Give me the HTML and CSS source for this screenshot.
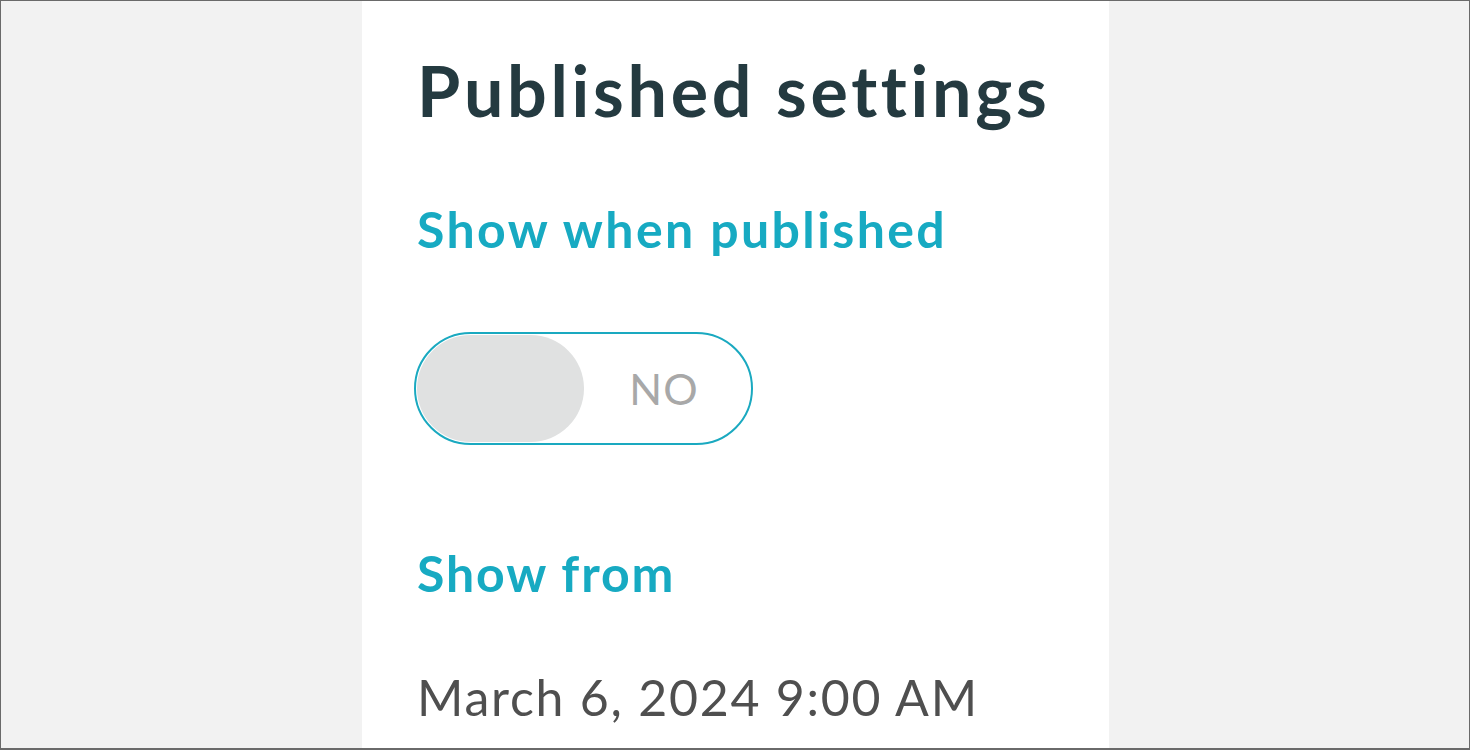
FILE: index.html
```html
<!DOCTYPE html>
<html lang="en">
<head>
<meta charset="utf-8">
<title>Published settings</title>
<link rel="stylesheet" href="styles.css">
</head>
<body>
<div class="frame">
  <main class="panel">
    <h1 class="title">Published settings</h1>
    <h2 class="label label-first">Show when published</h2>
    <div class="toggle" role="switch" aria-checked="false">
      <span class="knob"></span>
      <span class="state">NO</span>
    </div>
    <h2 class="label label-second">Show from</h2>
    <p class="date">March 6, 2024 9:00 AM</p>
  </main>
</div>
</body>
</html>
```
FILE: styles.css
```css
html, body {
  margin: 0;
  padding: 0;
}
body {
  width: 1470px;
  height: 750px;
  overflow: hidden;
  font-family: Lato, "Liberation Sans", sans-serif;
  font-variant-ligatures: none;
}
.frame {
  box-sizing: border-box;
  width: 1470px;
  height: 750px;
  border: 1px solid #6a6a6a;
  border-bottom-width: 2px;
  background: #f2f2f2;
  display: flex;
  padding-left: 361px;
}
.panel {
  width: 747px;
  background: #ffffff;
  box-sizing: border-box;
  padding: 54px 0 0 55px;
  display: flex;
  flex-direction: column;
  align-items: flex-start;
}
.title {
  margin: 0;
  font-size: 70px;
  line-height: 1;
  font-weight: 700;
  letter-spacing: 3.7px;
  color: #243a40;
}
.label {
  margin: 0;
  font-size: 50px;
  line-height: 1;
  font-weight: 700;
  color: #17aac2;
}
.label-first {
  margin-top: 79px;
  letter-spacing: 2.4px;
}
.label-second {
  margin-top: 103px;
  letter-spacing: 1.9px;
}
.toggle {
  margin-top: 78px;
  margin-left: -3px;
  box-sizing: border-box;
  width: 339px;
  height: 113px;
  border: 2.5px solid #1aa9c0;
  border-radius: 57px;
  padding: 1px;
  display: flex;
  align-items: stretch;
}
.knob {
  width: 167px;
  background: #e0e1e1;
  border-radius: 54px;
}
.state {
  flex: 1;
  display: flex;
  align-items: center;
  justify-content: center;
  padding-right: 6px;
  font-size: 43px;
  letter-spacing: 1px;
  color: #a8a8a8;
}
.date {
  margin: 74px 0 0;
  font-size: 50px;
  line-height: 1;
  letter-spacing: 1.75px;
  color: #4f4f4f;
}
```
